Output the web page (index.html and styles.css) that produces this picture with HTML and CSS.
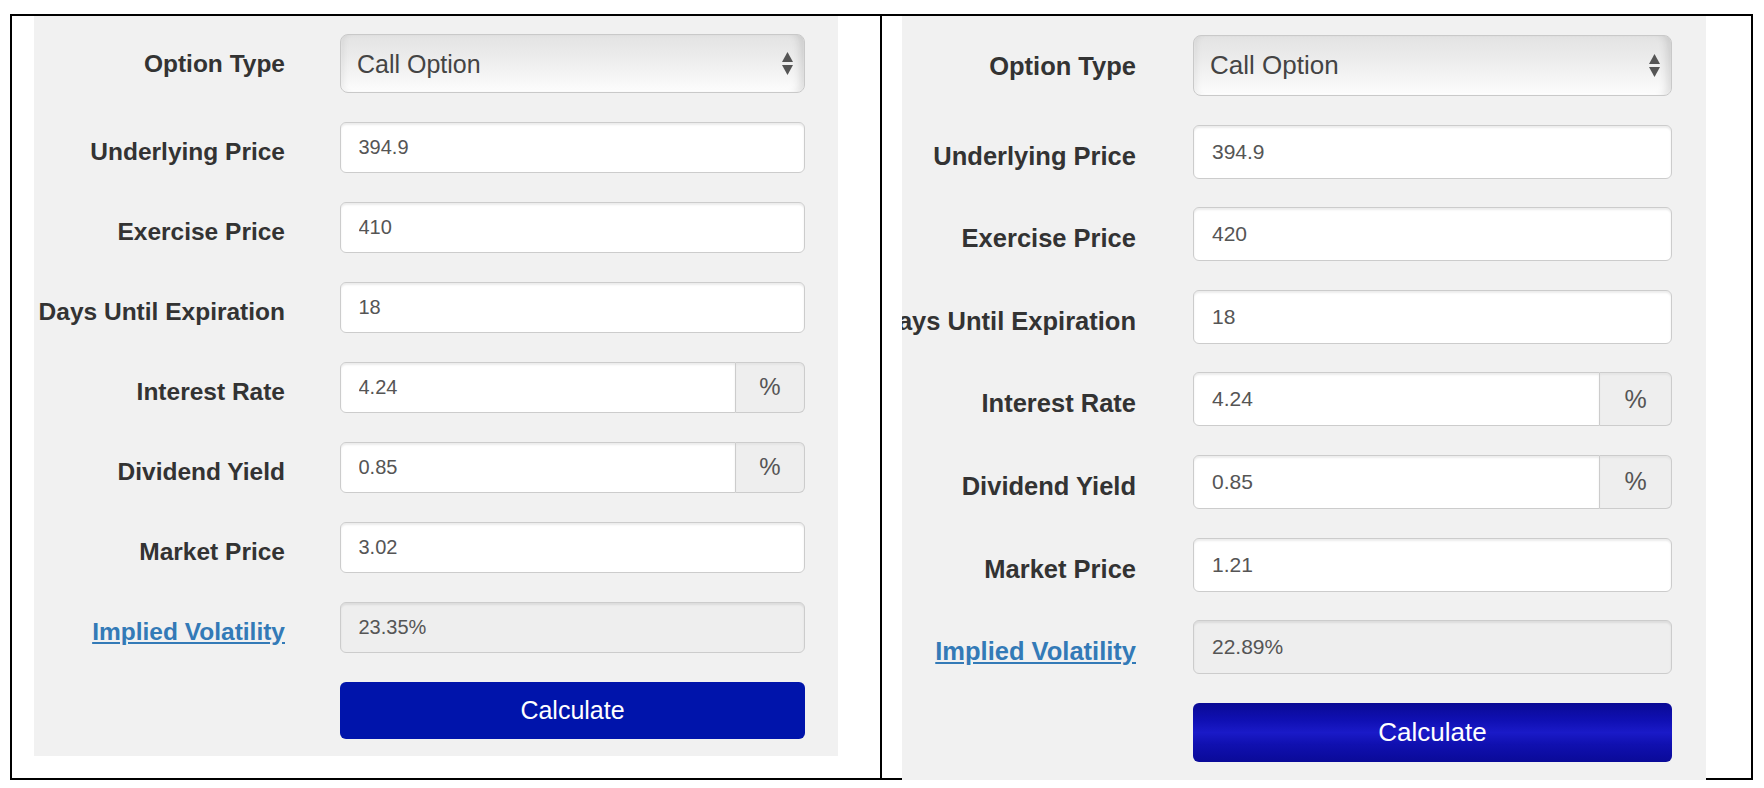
FILE: index.html
```html
<!DOCTYPE html>
<html lang="en">
<head>
<meta charset="utf-8">
<title>Implied Volatility Calculator</title>
<link rel="stylesheet" href="styles.css">
</head>
<body>
<div class="frame">
  <div class="cell cell-a">
    <form class="panel panel-a">
      <div class="form">
        <label class="lbl"><span>Option Type</span></label>
        <div class="select-wrap">
          <select class="sel"><option>Call Option</option><option>Put Option</option></select>
          <svg class="arrows" viewBox="0 0 11 23" aria-hidden="true"><polygon points="5.5,0 11,10 0,10"/><polygon points="0,13 11,13 5.5,23"/></svg>
        </div>

        <label class="lbl"><span>Underlying Price</span></label>
        <input class="ctl" type="text" value="394.9">

        <label class="lbl"><span>Exercise Price</span></label>
        <input class="ctl" type="text" value="410">

        <label class="lbl"><span>Days Until Expiration</span></label>
        <input class="ctl" type="text" value="18">

        <label class="lbl"><span>Interest Rate</span></label>
        <div class="igroup"><input class="ctl ctl-grp" type="text" value="4.24"><span class="addon">%</span></div>

        <label class="lbl"><span>Dividend Yield</span></label>
        <div class="igroup"><input class="ctl ctl-grp" type="text" value="0.85"><span class="addon">%</span></div>

        <label class="lbl"><span>Market Price</span></label>
        <input class="ctl" type="text" value="3.02">

        <label class="lbl"><a class="link" href="#">Implied Volatility</a></label>
        <input class="ctl ctl-ro" type="text" value="23.35%" readonly>

        <span class="spacer"></span>
        <button class="btn" type="button">Calculate</button>
      </div>
    </form>
  </div>
  <div class="cell cell-b">
    <form class="panel panel-b">
      <div class="form">
        <label class="lbl"><span>Option Type</span></label>
        <div class="select-wrap">
          <select class="sel"><option>Call Option</option><option>Put Option</option></select>
          <svg class="arrows" viewBox="0 0 11 23" aria-hidden="true"><polygon points="5.5,0 11,10 0,10"/><polygon points="0,13 11,13 5.5,23"/></svg>
        </div>

        <label class="lbl"><span>Underlying Price</span></label>
        <input class="ctl" type="text" value="394.9">

        <label class="lbl"><span>Exercise Price</span></label>
        <input class="ctl" type="text" value="420">

        <label class="lbl"><span>Days Until Expiration</span></label>
        <input class="ctl" type="text" value="18">

        <label class="lbl"><span>Interest Rate</span></label>
        <div class="igroup"><input class="ctl ctl-grp" type="text" value="4.24"><span class="addon">%</span></div>

        <label class="lbl"><span>Dividend Yield</span></label>
        <div class="igroup"><input class="ctl ctl-grp" type="text" value="0.85"><span class="addon">%</span></div>

        <label class="lbl"><span>Market Price</span></label>
        <input class="ctl" type="text" value="1.21">

        <label class="lbl"><a class="link" href="#">Implied Volatility</a></label>
        <input class="ctl ctl-ro" type="text" value="22.89%" readonly>

        <span class="spacer"></span>
        <button class="btn btn-gloss" type="button">Calculate</button>
      </div>
    </form>
  </div>
</div>
</body>
</html>
```
FILE: styles.css
```css
* { box-sizing: border-box; }
html, body { margin: 0; padding: 0; background: #fff; }
body { font-family: "Liberation Sans", Arial, Helvetica, sans-serif; }

.frame {
  display: flex;
  margin: 14px 0 0 10px;
  width: 1743px;
  height: 766px;
  border: 2px solid #000;
}
.cell { flex: none; height: 762px; }
.cell-a { width: 870px; border-right: 2px solid #000; padding-left: 22px; }
.cell-b { width: 867px; padding-left: 20px; }

.panel {
  display: block;
  margin: 0;
  background: #f1f1f1;
  width: 804px;
  overflow: hidden;
  position: relative;
}
.panel-a {
  height: 740px;
  padding-top: 18.3px;
  --lw: 251px; --cw: 465px; --gap: 55px; --rg: 28.4px;
  --ih: 51.6px; --sh: 59px; --bh: 57px;
  --lf: 24.5px; --lh: 28px; --lp: 16px;
  --if: 20px; --ip: 17.5px; --af: 24px; --sf: 25px; --bf: 25px; --aw: 69px;
}
.panel-b {
  height: 764px;
  padding-top: 18.7px;
  --lw: 234px; --cw: 479px; --gap: 57px; --rg: 28.6px;
  --ih: 54px; --sh: 61.3px; --bh: 59px;
  --lf: 25.5px; --lh: 29px; --lp: 17px;
  --if: 21px; --ip: 18px; --af: 25px; --sf: 26px; --bf: 26px; --aw: 72px;
}

.form {
  display: grid;
  grid-template-columns: var(--lw) var(--cw);
  column-gap: var(--gap);
  row-gap: var(--rg);
  align-items: start;
}

.lbl {
  display: flex;
  justify-content: flex-end;
  white-space: nowrap;
  font-weight: bold;
  color: #333;
  font-size: var(--lf);
  line-height: var(--lh);
  padding-top: var(--lp);
  min-width: 0;
}
.link { color: #337ab7; text-decoration: underline; }

.ctl {
  display: block;
  width: 100%;
  height: var(--ih);
  margin: 0;
  border: 1px solid #ccc;
  border-radius: 6px;
  background: #fff;
  box-shadow: inset 0 2px 2px rgba(0, 0, 0, 0.08);
  font-family: "Liberation Sans", Arial, Helvetica, sans-serif;
  font-size: var(--if);
  color: #555;
  padding: 0 var(--ip);
  outline: none;
}
.ctl-ro { background: #eee; }

.igroup { display: flex; width: 100%; height: var(--ih); }
.ctl-grp { flex: 1; min-width: 0; width: auto; border-radius: 6px 0 0 6px; }
.addon {
  flex: none;
  width: var(--aw);
  display: flex;
  align-items: center;
  justify-content: center;
  background: #eee;
  border: 1px solid #ccc;
  border-left: 0;
  border-radius: 0 6px 6px 0;
  color: #555;
  font-size: var(--af);
  box-shadow: inset 0 2px 2px rgba(0, 0, 0, 0.04);
}

.select-wrap { position: relative; height: var(--sh); }
.sel {
  -webkit-appearance: none;
  appearance: none;
  display: block;
  width: 100%;
  height: 100%;
  margin: 0;
  border: 1px solid #c9c9c9;
  border-radius: 8px;
  background: linear-gradient(to bottom, #e3e3e3 0%, #ececec 40%, #f7f7f7 80%, #fdfdfd 100%);
  box-shadow: inset 7px 0 7px -5px rgba(0, 0, 0, 0.07), inset -9px 0 8px -5px rgba(0, 0, 0, 0.12), inset 0 -2px 2px rgba(255, 255, 255, 0.8);
  font-family: "Liberation Sans", Arial, Helvetica, sans-serif;
  font-size: var(--sf);
  color: #444;
  padding: 0 40px 0 16px;
  outline: none;
}
.arrows {
  position: absolute;
  right: 12px;
  top: 50%;
  width: 11px;
  height: 23px;
  margin-top: -11.5px;
  fill: #555;
  pointer-events: none;
}

.spacer { display: block; }
.btn {
  display: block;
  width: 100%;
  height: var(--bh);
  margin: 0;
  border: 0;
  border-radius: 6px;
  background: #0014ab;
  color: #fff;
  font-family: "Liberation Sans", Arial, Helvetica, sans-serif;
  font-size: var(--bf);
  cursor: pointer;
}
.btn-gloss {
  background: linear-gradient(to bottom, #0a0a94 0%, #1010b4 30%, #1a1ac8 50%, #1010b0 70%, #0a0a98 100%);
}
```
